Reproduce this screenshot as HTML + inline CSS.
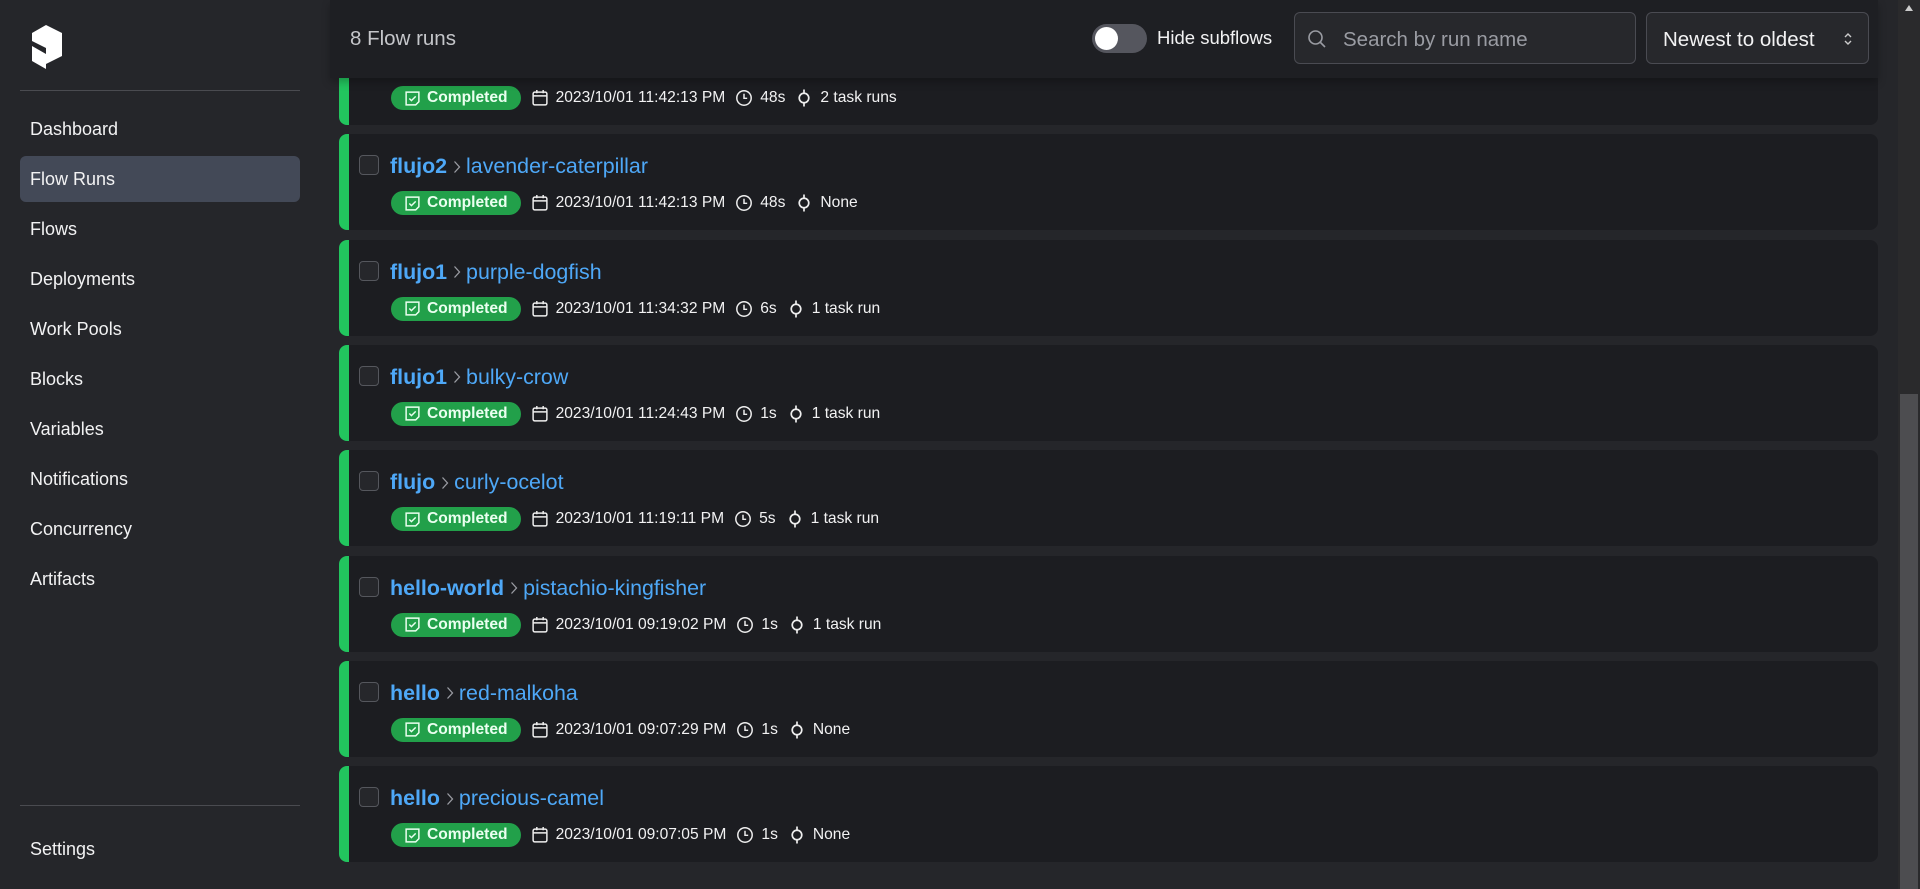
<!DOCTYPE html>
<html><head><meta charset="utf-8">
<style>
*{box-sizing:border-box;margin:0;padding:0}
body{width:1920px;height:889px;overflow:hidden;background:#25262a;font-family:"Liberation Sans",sans-serif;color:#f2f2f3;position:relative}
.side{position:absolute;left:0;top:0;width:321px;height:889px}
.div{position:absolute;left:20px;width:280px;height:1px;background:#4a4b50}
.nav{position:absolute;left:20px;width:280px;height:46px;line-height:46px;padding-left:10px;font-size:18px;border-radius:6px}
.nav.act{background:#434957}
.hdr{position:absolute;left:330px;top:0;width:1548px;height:78px;background:#1e1f23;box-shadow:0 4px 8px rgba(0,0,0,.25);z-index:5}
.card{position:absolute;left:339px;width:1539px;height:96px;background:#1c1d21;border-radius:8px;overflow:hidden}
.card:before{content:"";position:absolute;left:0;top:0;bottom:0;width:10px;background:#22c55e}
.cb{position:absolute;left:359px;top:21px;width:20px;height:20px;border:1.5px solid #55575d;border-radius:4px;background:#26272b}
.title{position:absolute;left:390px;top:20px;font-size:21.4px;color:#4ea8f7;white-space:nowrap;display:flex;align-items:center}
.title b{font-weight:bold}
.title svg{margin:0 5px 0 6px}
.meta{position:absolute;left:391px;top:57px;display:flex;align-items:center;font-size:15.6px;white-space:nowrap}
.badge{height:24px;border-radius:12px;background:#22a04a;padding:0 13px 0 13px;display:flex;align-items:center;font-weight:bold;color:#eafff0;margin-right:10px}
.badge svg{margin-right:6px}
.meta .i{margin-right:7px;display:flex}
.meta .t{margin-right:10px}
.sb{position:absolute;right:0;top:0;width:22px;height:889px;background:#2a2a2c}
.thumb{position:absolute;right:2px;top:394px;width:18px;height:495px;background:#4d4d50}
</style></head><body>
<div class="side">
<svg style="position:absolute;left:30px;top:24px" width="34" height="46" viewBox="0 0 34 46"><polygon points="2,9 16,1 32,9 32,32 16,40 16,24 2,17" fill="#fff"/><polygon points="2,22 16,30 16,45 2,37" fill="#fff"/></svg>
<div class="div" style="top:90px"></div>
<div class="nav" style="top:106px">Dashboard</div>
<div class="nav act" style="top:156px">Flow Runs</div>
<div class="nav" style="top:206px">Flows</div>
<div class="nav" style="top:256px">Deployments</div>
<div class="nav" style="top:306px">Work Pools</div>
<div class="nav" style="top:356px">Blocks</div>
<div class="nav" style="top:406px">Variables</div>
<div class="nav" style="top:456px">Notifications</div>
<div class="nav" style="top:506px">Concurrency</div>
<div class="nav" style="top:556px">Artifacts</div>
<div class="div" style="top:805px"></div>
<div class="nav" style="top:826px">Settings</div>
</div>

<div class="hdr">
<div style="position:absolute;left:20px;top:27px;font-size:20.5px;color:#c5c6ca">8 Flow runs</div>
<div style="position:absolute;left:762px;top:24px;width:55px;height:29px;border-radius:15px;background:#55565e"><div style="position:absolute;left:3px;top:3px;width:23px;height:23px;border-radius:50%;background:#fff"></div></div>
<div style="position:absolute;left:827px;top:27px;font-size:18.5px">Hide subflows</div>
<div style="position:absolute;left:964px;top:12px;width:342px;height:52px;border:1px solid #4a4b52;border-radius:6px;background:#27282c">
<svg style="position:absolute;left:12px;top:16px" width="20" height="20" viewBox="0 0 20 20" fill="none" stroke="#9a9ca3" stroke-width="1.6"><circle cx="8.5" cy="8.5" r="6.5"/><path d="M13.5 13.5L18 18"/></svg>
<div style="position:absolute;left:48px;top:15px;font-size:20.5px;color:#9a9ca3">Search by run name</div></div>
<div style="position:absolute;left:1316px;top:12px;width:223px;height:52px;border:1px solid #4a4b52;border-radius:6px;background:#27282c">
<div style="position:absolute;left:16px;top:15px;font-size:20.5px">Newest to oldest</div>
<svg style="position:absolute;left:196px;top:18px" width="10" height="16" viewBox="0 0 10 16" fill="none" stroke="#ccc" stroke-width="1.4"><path d="M2 6l3-3 3 3M2 10l3 3 3-3"/></svg></div>
</div>

<div id="cards"></div>
<div class="sb"><div class="thumb"></div><div style="position:absolute;left:7px;top:5px;border-left:4px solid transparent;border-right:4px solid transparent;border-bottom:6px solid #ccc"></div></div>

<script>
const runs=[["x","y","48s","2 task runs","2023/10/01 11:42:13 PM"],
["flujo2","lavender-caterpillar","48s","None","2023/10/01 11:42:13 PM"],
["flujo1","purple-dogfish","6s","1 task run","2023/10/01 11:34:32 PM"],
["flujo1","bulky-crow","1s","1 task run","2023/10/01 11:24:43 PM"],
["flujo","curly-ocelot","5s","1 task run","2023/10/01 11:19:11 PM"],
["hello-world","pistachio-kingfisher","1s","1 task run","2023/10/01 09:19:02 PM"],
["hello","red-malkoha","1s","None","2023/10/01 09:07:29 PM"],
["hello","precious-camel","1s","None","2023/10/01 09:07:05 PM"]];
const cal='<svg width="18" height="18" viewBox="0 0 17 17" fill="none" stroke="#eee" stroke-width="1.4"><rect x="2" y="3" width="13" height="12" rx="1.5"/><path d="M2 6.5h13M5.5 1v3M11.5 1v3"/></svg>';
const clk='<svg width="18" height="18" viewBox="0 0 17 17" fill="none" stroke="#eee" stroke-width="1.4"><circle cx="8.5" cy="8.5" r="6.8"/><path d="M8.5 4.5v4.3h3"/></svg>';
const tsk='<svg width="18" height="18" viewBox="0 0 17 17" fill="none" stroke="#eee" stroke-width="1.6"><circle cx="8.5" cy="8.5" r="4.5"/><path d="M8.5 0.5v3.5M8.5 13v3.5"/></svg>';
const chk='<svg width="17" height="17" viewBox="0 0 16 16" fill="none" stroke="#eafff0" stroke-width="1.4"><path d="M2 2h12v9l-3 3H2z"/><path d="M5 8l2 2 4-4"/></svg>';
const chev='<svg width="8" height="14" viewBox="0 0 8 14" fill="none" stroke="#9a9ca3" stroke-width="1.3"><path d="M1.5 1.5L6.5 7l-5 5.5"/></svg>';
let h='';
runs.forEach((r,i)=>{const top=29+i*105.3;
h+=`<div class="card" style="top:${top}px;left:339px"></div>`;
h+=`<div style="position:absolute;top:${top}px;left:0;width:1px;height:1px">
<div class="cb"></div>
<div class="title"><b>${r[0]}</b>${chev}<span>${r[1]}</span></div>
<div class="meta"><div class="badge">${chk}Completed</div><span class="i">${cal}</span><span class="t">${r[4]}</span><span class="i">${clk}</span><span class="t">${r[2]}</span><span class="i">${tsk}</span><span class="t">${r[3]}</span></div></div>`;});
document.getElementById('cards').innerHTML=h;
</script>
</body></html>
